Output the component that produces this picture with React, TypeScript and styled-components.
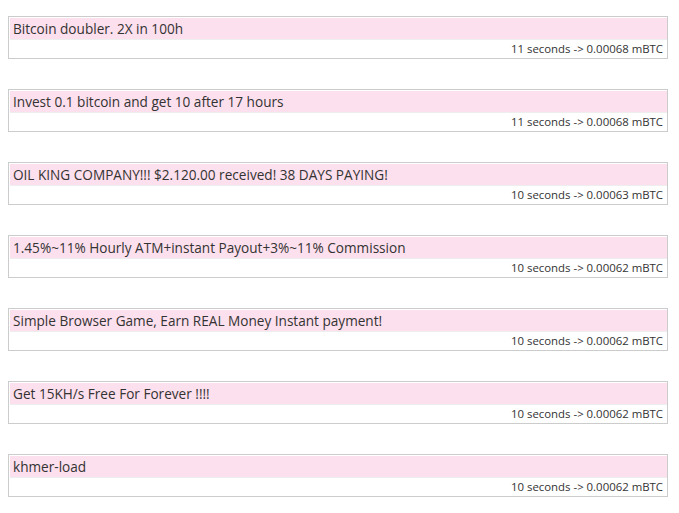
import styled, { createGlobalStyle } from "styled-components";

const Global = createGlobalStyle`
  body {
    margin: 8px;
    background: #fff;
    font-family: "Open Sans", "Noto Sans", sans-serif;
    color: #333;
  }
`;

const List = styled.div`
  display: flex;
  flex-direction: column;
  gap: 30px;
  padding-top: 8px;
  width: 660px;
`;

const Card = styled.div`
  border: 1px solid #ccc;
  padding: 1px 0 0 1px;
`;

const Title = styled.div`
  background: #fde0ed;
  height: 21px;
  line-height: 21px;
  padding-left: 3px;
  font-size: 13.6px;
  border-bottom: 1px solid #eee;
  white-space: nowrap;
`;

const Meta = styled.div`
  height: 18px;
  line-height: 18px;
  text-align: right;
  padding-right: 4px;
  font-size: 11.4px;
`;

const ads = [
  { title: "Bitcoin doubler. 2X in 100h", secs: 11, reward: "0.00068" },
  { title: "Invest 0.1 bitcoin and get 10 after 17 hours", secs: 11, reward: "0.00068" },
  { title: "OIL KING COMPANY!!! $2.120.00 received! 38 DAYS PAYING!", secs: 10, reward: "0.00063" },
  { title: "1.45%~11% Hourly ATM+instant Payout+3%~11% Commission", secs: 10, reward: "0.00062" },
  { title: "Simple Browser Game, Earn REAL Money Instant payment!", secs: 10, reward: "0.00062" },
  { title: "Get 15KH/s Free For Forever !!!!", secs: 10, reward: "0.00062" },
  { title: "khmer-load", secs: 10, reward: "0.00062" },
];

const App = () => (
  <>
    <Global />
    <List>
      {ads.map((ad) => (
        <Card key={ad.title}>
          <Title>{ad.title}</Title>
          <Meta>
            {ad.secs} seconds -&gt; {ad.reward} mBTC
          </Meta>
        </Card>
      ))}
    </List>
  </>
);

export default App;
